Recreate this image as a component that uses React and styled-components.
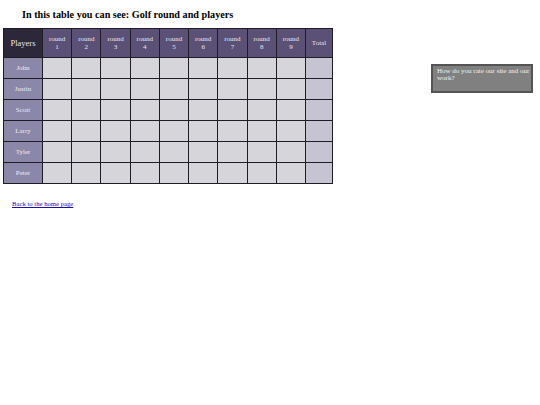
import React from 'react';
import styled, {createGlobalStyle} from 'styled-components';

const GlobalStyle = createGlobalStyle`
  html, body {
    margin: 0;
    padding: 0;
    background: #ffffff;
    font-family: "Liberation Serif", "Times New Roman", serif;
  }
`;

const Page = styled.div`
  display: flex;
  justify-content: space-between;
  width: 540px;
  height: 405px;
`;

const Main = styled.div`
  display: flex;
  flex-direction: column;
  padding-left: 3px;
`;

const Title = styled.h3`
  margin: 8px 0 0 19px;
  height: 20px;
  font-size: 10.2px;
  line-height: 13px;
  font-weight: bold;
  color: #000;
`;

const Table = styled.table`
  border-collapse: collapse;
  border: 1px solid #8a8a8a;
  table-layout: fixed;
  width: 330px;
`;

const HeadCell = styled.th`
  height: 28px;
  padding: 0;
  border: 1px solid #1f1c26;
  background: ${({dark}) => (dark ? '#2d2839' : '#5b5177')};
  color: #e8e6ef;
  font-weight: normal;
  font-size: ${({big}) => (big ? '8.5px' : '7px')};
  line-height: 8px;
  text-align: center;
  width: ${({w}) => (w ? `${w}px` : 'auto')};
`;

const NameCell = styled.td`
  height: 20px;
  padding: 0;
  border: 1px solid #1f1c26;
  background: #8b87a9;
  color: #eceaf3;
  font-size: 7px;
  text-align: center;
`;

const Cell = styled.td`
  height: 20px;
  padding: 0;
  border: 1px solid #1f1c26;
  background: ${({total}) => (total ? '#c6c3d3' : '#d6d5da')};
`;

const BackLink = styled.a`
  display: inline-block;
  margin: 16px 0 0 9px;
  font-size: 6.7px;
  color: #1a0dab;
  text-decoration: underline;
`;

const Aside = styled.aside`
  margin: 64px 7px 0 0;
`;

const RateBox = styled.div`
  width: 94px;
  height: 23px;
  padding: 2px 0 0 4px;
  box-sizing: content-box;
  background: #808080;
  border: 2px solid #545454;
  color: #f2f2f2;
  font-size: 7px;
  line-height: 7px;
`;

const rounds = [1, 2, 3, 4, 5, 6, 7, 8, 9];
const players = ['John', 'Justin', 'Scott', 'Larry', 'Tyler', 'Peter'];

export default function App() {
  return (
    <>
      <GlobalStyle />
      <Page>
        <Main>
          <Title>In this table you can see: Golf round and players</Title>
          <Table>
            <thead>
              <tr>
                <HeadCell dark big w={38}>Players</HeadCell>
                {rounds.map(r => (
                  <HeadCell key={r}>
                    round
                    <br />
                    {r}
                  </HeadCell>
                ))}
                <HeadCell w={26}>Total</HeadCell>
              </tr>
            </thead>
            <tbody>
              {players.map(p => (
                <tr key={p}>
                  <NameCell>{p}</NameCell>
                  {rounds.map(r => (
                    <Cell key={r} />
                  ))}
                  <Cell total />
                </tr>
              ))}
            </tbody>
          </Table>
          <div>
            <BackLink href="#">Back to the home page</BackLink>
          </div>
        </Main>
        <Aside>
          <RateBox>How do you rate our site and our work?</RateBox>
        </Aside>
      </Page>
    </>
  );
}
